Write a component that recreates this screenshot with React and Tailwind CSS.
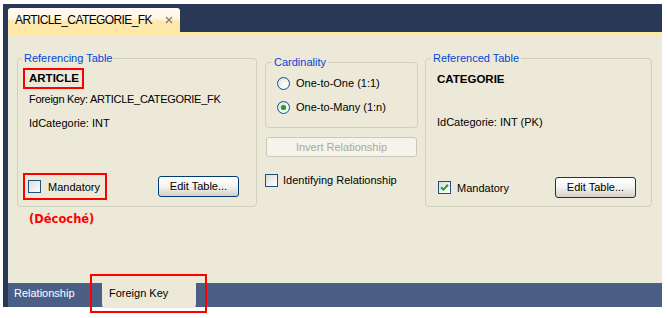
function Radio({ checked }) {
  return (
    <span className="w-[13px] h-[13px] rounded-full border border-[#1c5180] bg-[radial-gradient(circle_at_65%_65%,#ffffff_0%,#f4f4f0_40%,#d4d4cc_100%)] flex items-center justify-center shrink-0">
      {checked && <span className="w-[5px] h-[5px] rounded-full bg-[#21a121] shadow-[0_0_1px_#55d455]" />}
    </span>
  );
}

function CheckBox({ checked }) {
  return (
    <span className="w-[13px] h-[13px] border border-[#1c5180] bg-linear-to-br from-[#dcdcd7] to-[#ffffff] flex items-center justify-center shrink-0">
      {checked && (
        <svg width="9" height="9" viewBox="0 0 9 9">
          <path d="M1 4.2 L3.4 6.6 L8 1.8" stroke="#21a121" strokeWidth="2" fill="none" />
        </svg>
      )}
    </span>
  );
}

function XpButton({ children, className = "" }) {
  return (
    <button
      type="button"
      className={`h-[21px] w-[81px] rounded-[3px] border border-[#003c74] bg-linear-to-b from-[#ffffff] via-[#f3f3ef] to-[#d6d0c5] text-[11px] leading-none text-black flex items-center justify-center ${className}`}
    >
      {children}
    </button>
  );
}

function GroupBox({ title, className = "", legendPad = "pl-[4px]", children }) {
  return (
    <fieldset className={`border border-[#d0d0bf] rounded-[4px] ${legendPad} ${className}`}>
      <legend className="px-[2px] text-[11px] leading-[12px] text-[#0046d5]">{title}</legend>
      {children}
    </fieldset>
  );
}

export default function App() {
  return (
    <div
      className="w-[668px] h-[318px] bg-white pt-[4px] pl-[3px] relative"
      style={{ fontFamily: '"Liberation Sans", Arial, sans-serif' }}
    >
      <div className="w-[659px] h-[303px] bg-[#293955] pl-[5px] flex flex-col">
        {/* Document tab strip */}
        <div className="h-[28px] flex items-end">
          <div className="w-[172px] h-[24px] rounded-t-[3px] bg-[linear-gradient(to_bottom,#fffdf7_0%,#fff5e2_45%,#ffe8b0_55%,#ffe8a6_100%)] flex items-center pl-[7px] pr-[7px]">
            <span className="text-[12px] tracking-[-0.6px] text-black">ARTICLE_CATEGORIE_FK</span>
            <svg className="ml-auto" width="8" height="8" viewBox="0 0 8 8">
              <path d="M1 1 L7 7 M7 1 L1 7" stroke="#7a7a80" strokeWidth="1.2" />
            </svg>
          </div>
        </div>
        <div className="h-[4px] bg-[#ffe8a6]" />

        {/* Content */}
        <div className="h-[247px] bg-[#ece9d8] flex pl-[9px] pt-[16px] text-[11px] text-black">
          {/* Referencing Table */}
          <div className="w-[240px] flex flex-col">
            <GroupBox title="Referencing Table" className="h-[155px]">
              <div className="flex flex-col">
                <span className="mt-[4px] ml-[1px] w-[61px] h-[21px] border-2 border-[#ff0000] pl-[4px] flex items-center font-bold text-[11.5px]">
                  ARTICLE
                </span>
                <span className="mt-[3px] ml-[7px] leading-[14px] tracking-[-0.3px]">Foreign Key: ARTICLE_CATEGORIE_FK</span>
                <span className="mt-[10px] ml-[7px] leading-[14px]">IdCategorie: INT</span>
                <div className="mt-[43px] flex items-center">
                  <div className="ml-[1px] w-[84px] h-[27px] border-2 border-[#ff0000] pl-[3px] flex items-center gap-[7px]">
                    <CheckBox />
                    <span className="leading-[14px]">Mandatory</span>
                  </div>
                  <XpButton className="ml-auto mr-[17px]">Edit Table...</XpButton>
                </div>
              </div>
            </GroupBox>
            <span
              className="mt-[5px] ml-[12px] leading-[14px] font-bold text-[11.5px] text-[#ff0000]"
              style={{ fontFamily: '"DejaVu Sans", Verdana, sans-serif' }}
            >
              (Décoché)
            </span>
          </div>

          {/* Cardinality */}
          <div className="w-[153px] ml-[8px] flex flex-col">
            <GroupBox title="Cardinality" className="h-[72px] mt-[4px]" legendPad="pl-[6px]">
              <div className="flex flex-col">
                <label className="mt-[8px] ml-[5px] flex items-center gap-[6px] leading-[14px]">
                  <Radio />
                  One-to-One (1:1)
                </label>
                <label className="mt-[10px] ml-[5px] flex items-center gap-[6px] leading-[14px]">
                  <Radio checked />
                  One-to-Many (1:n)
                </label>
              </div>
            </GroupBox>
            <button
              type="button"
              disabled
              className="mt-[9px] ml-[1px] w-[151px] h-[20px] rounded-[3px] border border-[#c9c7ba] bg-[#f5f4ea] text-[11px] text-[#aca899] flex items-center justify-center"
            >
              Invert Relationship
            </button>
            <label className="mt-[16px] flex items-center gap-[5px] leading-[14px]">
              <CheckBox />
              Identifying Relationship
            </label>
          </div>

          {/* Referenced Table */}
          <div className="w-[227px] ml-[7px]">
            <GroupBox title="Referenced Table" className="h-[155px]" legendPad="pl-[5px]">
              <div className="flex flex-col">
                <span className="mt-[8px] ml-[6px] leading-[14px] font-bold text-[11.5px]">CATEGORIE</span>
                <span className="mt-[29px] ml-[6px] leading-[14px]">IdCategorie: INT (PK)</span>
                <div className="mt-[48px] flex items-center">
                  <span className="ml-[7px]">
                    <CheckBox checked />
                  </span>
                  <span className="ml-[6px] leading-[14px]">Mandatory</span>
                  <XpButton className="ml-auto mr-[15px]">Edit Table...</XpButton>
                </div>
              </div>
            </GroupBox>
          </div>
        </div>

        {/* Bottom view tabs */}
        <div className="h-[24px] bg-[#4b5f86] flex items-start text-[11px]">
          <span className="w-[94px] pl-[6px] pt-[3px] leading-[14px] text-white">Relationship</span>
          <div className="w-[94px] h-[25px] rounded-b-[4px] bg-[#ece9d8] pl-[7px] pt-[3px] leading-[14px] text-black">
            Foreign Key
          </div>
        </div>
      </div>

      {/* Annotation frame */}
      <div className="absolute left-[90px] top-[274px] w-[117px] h-[39px] border-2 border-[#ff0000]" />
    </div>
  );
}
